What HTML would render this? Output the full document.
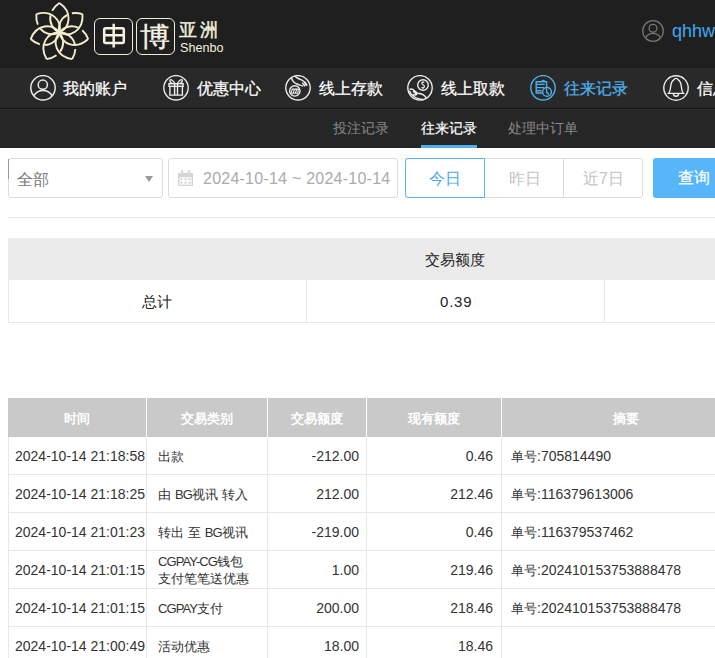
<!DOCTYPE html>
<html><head><meta charset="utf-8">
<style>
*{margin:0;padding:0;box-sizing:border-box}
html,body{width:715px;height:658px;overflow:hidden;background:#fff;font-family:"Liberation Sans",sans-serif}
.abs{position:absolute}
#hdr{position:absolute;left:0;top:0;width:715px;height:68px;background:#1f1f1f}
#nav{position:absolute;left:0;top:68px;width:715px;height:40px;background:#292929}
#navline{position:absolute;left:0;top:108px;width:715px;height:1px;background:#131313}
#navline2{position:absolute;left:0;top:109px;width:715px;height:1px;background:#303030}
#sub{position:absolute;left:0;top:110px;width:715px;height:38px;background:#262626}
.nv{position:absolute;top:81px;font-size:16px;line-height:16px;color:#fff;white-space:nowrap;-webkit-text-stroke:0.25px currentColor}
.nico{position:absolute;top:75px;width:26px;height:26px}
.sb{position:absolute;top:120px;font-size:14px;line-height:16px;color:#8a8a8a;white-space:nowrap}
.box{position:absolute;top:158px;height:40px;border:1px solid #dcdcdc;border-radius:3px;background:#fff}
.t{position:absolute;font-size:14px;line-height:16px;color:#333;white-space:nowrap}
.th{position:absolute;top:399px;height:38px;line-height:38px;text-align:center;color:#fff;font-weight:bold;font-size:14px;white-space:nowrap}
.td{position:absolute;height:38px;display:flex;align-items:center;font-size:14px;line-height:17px;color:#333;white-space:nowrap}
.td.r{justify-content:flex-end;text-align:right}
.c{font-size:13px}
.n{font-size:13px;letter-spacing:-0.9px}
.line{position:absolute;background:#e8e8e8}
</style></head><body>
<div id="hdr"></div>
<div id="nav"></div>
<div id="navline"></div>
<div id="navline2"></div>
<div id="sub"></div>

<!-- logo -->
<svg class="abs" style="left:26px;top:0" width="66" height="64" viewBox="-33.4 -32.5 66 64">
 <defs><path id="pt" d="M0.00 0.00 C11.00 -5.00 13.50 -20.35 0.00 -29.50 M0.00 0.00 C-6.82 -3.10 -10.37 -10.18 -8.87 -17.29 M-7.24 -21.74 C-5.75 -24.54 -3.38 -27.21 0.00 -29.50"/></defs>
 <g fill="none" stroke="#f2eecb" stroke-width="1.9" stroke-linecap="butt">
  <use href="#pt" transform="rotate(0.000)"/>
  <use href="#pt" transform="rotate(51.429)"/>
  <use href="#pt" transform="rotate(102.857)"/>
  <use href="#pt" transform="rotate(154.286)"/>
  <use href="#pt" transform="rotate(205.714)"/>
  <use href="#pt" transform="rotate(257.143)"/>
  <use href="#pt" transform="rotate(308.571)"/>
 </g>
 <circle cx="0" cy="0" r="1.9" fill="#eceae0"/>
</svg>
<div class="abs" style="left:94px;top:18px;width:39px;height:37px;border:1.8px solid #f0ecd8;border-radius:6px"></div>
<div class="abs" style="left:136px;top:18px;width:39px;height:37px;border:1.8px solid #f0ecd8;border-radius:6px"></div>
<svg class="abs" style="left:94px;top:18px" width="39" height="37" viewBox="0 0 39 37"><g fill="none" stroke="#f5f2e2" stroke-width="2.5"><rect x="10.2" y="10.2" width="19.6" height="14.8" rx="1.5"/><path d="M10.2 17.2 H29.8 M19.7 5.7 V29.4"/></g></svg>
<div class="abs" style="left:136px;top:18px;width:39px;height:37px;color:#f5f2e2;font-size:26px;line-height:37px;text-align:center;transform:translateY(1px) scale(1.16,1.04);-webkit-text-stroke:0.3px #f5f2e2">博</div>
<div class="abs" style="left:179px;top:20px;color:#f3f0de;font-size:18px;line-height:20px;letter-spacing:3px;-webkit-text-stroke:0.45px #f3f0de">亚洲</div>
<div class="abs" style="left:180px;top:41px;color:#f3f0de;font-size:12.6px;line-height:14px">Shenbo</div>

<!-- user -->
<svg class="abs" style="left:642px;top:20px" width="22" height="22" viewBox="0 0 22 22">
 <g fill="none" stroke="#777" stroke-width="1.25"><circle cx="11" cy="11" r="10.3"/><circle cx="11" cy="8.3" r="3.9"/><path d="M3.6 17.6 A8.6 8.6 0 0 1 18.4 17.6"/></g>
</svg>
<div class="abs" style="left:672px;top:21px;color:#40a8f6;font-size:18px;line-height:20px">qhhw</div>

<!-- nav -->
<svg class="nico" style="left:30px" viewBox="0 0 26 26"><g fill="none" stroke="#ececec" stroke-width="1.5"><circle cx="13" cy="12.8" r="12.2"/><circle cx="12.8" cy="9.7" r="4.6"/><path d="M3.8 20.8 A10.6 10.6 0 0 1 22.2 20.8"/></g></svg>
<div class="nv" style="left:63px">我的账户</div>
<svg class="nico" style="left:163px" viewBox="0 0 26 26"><g fill="none" stroke="#ececec" stroke-width="1.4"><circle cx="13" cy="12.8" r="12.2"/><rect x="6" y="8.7" width="14.1" height="2.6"/><path d="M6.9 11.3 V20.1 H19.4 V11.3 M11.6 8.7 V20.1 M14.5 8.7 V20.1 M12 8.7 C10.5 6.5 8.5 4.2 7.3 4.8 C6.2 5.5 7.3 7.8 9.3 8.7 M14.2 8.7 C15.7 6.5 17.7 4.2 18.9 4.8 C20 5.5 18.9 7.8 16.9 8.7"/></g></svg>
<div class="nv" style="left:197px">优惠中心</div>
<svg class="nico" style="left:285px" viewBox="0 0 26 26"><g fill="none" stroke="#ececec" stroke-width="1.4"><circle cx="13" cy="12.8" r="12.2"/><circle cx="9.8" cy="15.9" r="5.2"/><path d="M7.3 14.1 H13.3 L12.8 18.2 H6 Z M9.4 14.3 L8.3 18 M11.6 14.3 L10.5 18" stroke-width="1.15"/><path d="M6.3 1.8 C7 5.5 9 8 12 9 C14 9.8 16 10.3 18.3 11.2 M9.3 0.8 C11 2.6 13 3.8 16.5 4.9 C19.5 6.2 21.2 8.5 22.2 10.6 M17.2 7.6 L20.2 11.2 M19.2 7.2 L21.8 10.6"/></g></svg>
<div class="nv" style="left:319px">线上存款</div>
<svg class="nico" style="left:407px" viewBox="0 0 26 26"><g fill="none" stroke="#ececec" stroke-width="1.4"><circle cx="13" cy="12.8" r="12.2"/><circle cx="16" cy="10" r="5.3"/><path d="M17.3 7.6 C16.5 6.8 14.8 7 14.8 8.3 C14.8 10 17.4 9.6 17.4 11.6 C17.4 13 15.5 13.1 14.6 12.3 M16 6.2 V7.2 M16 12.9 V13.9" stroke-width="1.2"/><path d="M2.6 14.6 C3.6 13.6 5.2 13.9 6.6 15 L10.6 18.2 C14 18.4 17.6 19.6 19.4 23.2 M2.4 15.6 C3.6 19.2 7.2 22.6 12.5 24 L16.6 24.7 M6 16 L9.6 19.4 C8.8 20.4 7.4 20.2 6.2 19.2"/></g></svg>
<div class="nv" style="left:441px">线上取款</div>
<svg class="nico" style="left:530px" viewBox="0 0 26 26"><g fill="none" stroke="#4fb0ee" stroke-width="1.4"><circle cx="13" cy="12.8" r="12.2"/><path d="M12.3 18 H6.2 V6.7 H16.6 V12.2"/><path d="M11.7 6.7 A1.6 1.6 0 0 1 14.8 6.7"/><path d="M6.8 9.4 H14.7 M6.8 12.6 H14 M6.8 15.8 H11.5"/><circle cx="17" cy="16.9" r="4.4"/><path d="M16.6 13.6 V17.4 L19 19.4"/></g></svg>
<div class="nv" style="left:564px;color:#4fb0ee">往来记录</div>
<svg class="nico" style="left:663px" viewBox="0 0 26 26"><g fill="none" stroke="#ececec" stroke-width="1.4"><circle cx="13" cy="13" r="12.2"/><path d="M5.5 18.4 H20.5 C19.2 17 18.6 15 18.4 12 C18.1 8 17 5.8 15 4.6 C14.5 3 11.5 3 11 4.6 C9 5.8 7.9 8 7.6 12 C7.4 15 6.8 17 5.5 18.4 Z M10.4 18.4 C10.4 22.2 15.6 22.2 15.6 18.4"/></g></svg>
<div class="nv" style="left:697px">信息</div>

<!-- subnav -->
<div class="sb" style="left:333px">投注记录</div>
<div class="sb" style="left:421px;color:#fff;-webkit-text-stroke:0.2px #fff">往来记录</div>
<div class="abs" style="left:421px;top:145px;width:56px;height:3px;background:#4fb0f2"></div>
<div class="sb" style="left:508px">处理中订单</div>

<!-- filters -->
<div class="box" style="left:8px;width:155px"></div>
<div class="abs" style="left:8px;top:159px;width:1px;height:20px;background:#999"></div>
<div class="abs" style="left:17px;top:171px;font-size:16px;line-height:18px;color:#777">全部</div>
<div class="abs" style="left:145px;top:176px;width:0;height:0;border-left:4px solid transparent;border-right:4px solid transparent;border-top:6px solid #999"></div>
<div class="box" style="left:168px;width:230px"></div>
<svg class="abs" style="left:177px;top:170px" width="17" height="17" viewBox="0 0 17 17"><path fill="#d4d4d4" d="M1 3 H4 V4.5 H6 V3 H11 V4.5 H13 V3 H16 V16 H1 Z"/><rect x="2.5" y="7.2" width="12" height="7.5" fill="#fff"/><g fill="#d4d4d4"><rect x="3.5" y="8.2" width="2" height="2"/><rect x="7.5" y="8.2" width="2" height="2"/><rect x="11.5" y="8.2" width="2" height="2"/><rect x="3.5" y="11.7" width="2" height="2"/><rect x="7.5" y="11.7" width="2" height="2"/><rect x="11.5" y="11.7" width="2" height="2"/></g><g fill="none" stroke="#d4d4d4" stroke-width="1.1"><rect x="4.2" y="0.8" width="1.6" height="3.6" rx="0.8"/><rect x="11.2" y="0.8" width="1.6" height="3.6" rx="0.8"/></g></svg>
<div class="abs" style="left:203px;top:170px;font-size:16px;line-height:18px;color:#ababab;letter-spacing:0.24px">2024-10-14 ~ 2024-10-14</div>

<div class="abs" style="left:405px;top:158px;width:238px;height:40px;border:1px solid #dcdcdc;border-radius:3px"></div>
<div class="abs" style="left:484px;top:158px;width:1px;height:40px;background:#dcdcdc"></div>
<div class="abs" style="left:563px;top:158px;width:1px;height:40px;background:#dcdcdc"></div>
<div class="abs" style="left:405px;top:158px;width:80px;height:40px;border:1px solid #5ab4f4;border-radius:3px 0 0 3px"></div>
<div class="abs" style="left:429px;top:170px;font-size:16px;line-height:18px;color:#4aa8ef">今日</div>
<div class="abs" style="left:509px;top:170px;font-size:16px;line-height:18px;color:#c4c4c4">昨日</div>
<div class="abs" style="left:583px;top:170px;font-size:16px;line-height:18px;color:#c4c4c4">近7日</div>
<div class="abs" style="left:653px;top:158px;width:100px;height:40px;background:#56b6f9;border-radius:3px"></div>
<div class="abs" style="left:678px;top:169px;font-size:16px;line-height:18px;color:#fff;-webkit-text-stroke:0.2px #fff">查询</div>

<div class="line" style="left:8px;top:217px;width:707px;height:1px"></div>

<!-- summary -->
<div class="abs" style="left:8px;top:238px;width:707px;height:42px;background:#ebebeb"></div>
<div class="line" style="left:8px;top:280px;width:1px;height:43px"></div>
<div class="line" style="left:306px;top:280px;width:1px;height:43px"></div>
<div class="line" style="left:604px;top:280px;width:1px;height:43px"></div>
<div class="line" style="left:8px;top:322px;width:707px;height:1px"></div>
<div class="t" style="left:142px;top:252px;width:0"></div>
<div class="t" style="left:425px;top:252px;font-size:15px;color:#222">交易额度</div>
<div class="t" style="left:142px;top:294px;font-size:15px;color:#222">总计</div>
<div class="t" style="left:440px;top:294px;font-size:15px;color:#222;letter-spacing:0.8px">0.39</div>

<!-- table -->
<div class="abs" style="left:8px;top:398px;width:707px;height:39px;background:#c9c9c9"></div>
<div class="abs" style="left:146px;top:398px;width:1px;height:39px;background:#fff"></div>
<div class="abs" style="left:267px;top:398px;width:1px;height:39px;background:#fff"></div>
<div class="abs" style="left:366px;top:398px;width:1px;height:39px;background:#fff"></div>
<div class="abs" style="left:501px;top:398px;width:1px;height:39px;background:#fff"></div>
<div class="line" style="left:8px;top:437px;width:1px;height:221px"></div>
<div class="line" style="left:146px;top:437px;width:1px;height:221px"></div>
<div class="line" style="left:267px;top:437px;width:1px;height:221px"></div>
<div class="line" style="left:366px;top:437px;width:1px;height:221px"></div>
<div class="line" style="left:501px;top:437px;width:1px;height:221px"></div>
<div class="line" style="left:8px;top:474px;width:707px;height:1px"></div>
<div class="line" style="left:8px;top:512px;width:707px;height:1px"></div>
<div class="line" style="left:8px;top:550px;width:707px;height:1px"></div>
<div class="line" style="left:8px;top:588px;width:707px;height:1px"></div>
<div class="line" style="left:8px;top:626px;width:707px;height:1px"></div>
<div class="th" style="left:8px;width:138px"><span class="c">时间</span></div>
<div class="th" style="left:146px;width:121px"><span class="c">交易类别</span></div>
<div class="th" style="left:267px;width:99px"><span class="c">交易额度</span></div>
<div class="th" style="left:366px;width:135px"><span class="c">现有额度</span></div>
<div class="th" style="left:501px;width:250px"><span class="c">摘要</span></div>
<div class="td" style="left:15px;top:437px"><span>2024-10-14 21:18:58</span></div>
<div class="td" style="left:158px;top:437px"><span><span class="c">出款</span></span></div>
<div class="td r" style="left:267px;width:92px;top:437px"><span>-212.00</span></div>
<div class="td r" style="left:366px;width:127px;top:437px"><span>0.46</span></div>
<div class="td" style="left:511px;top:437px"><span><span class="c">单号</span>:705814490</span></div>
<div class="td" style="left:15px;top:475px"><span>2024-10-14 21:18:25</span></div>
<div class="td" style="left:158px;top:475px"><span><span class="c">由</span> <span class="n">BG</span><span class="c">视讯</span> <span class="c">转入</span></span></div>
<div class="td r" style="left:267px;width:92px;top:475px"><span>212.00</span></div>
<div class="td r" style="left:366px;width:127px;top:475px"><span>212.46</span></div>
<div class="td" style="left:511px;top:475px"><span><span class="c">单号</span>:116379613006</span></div>
<div class="td" style="left:15px;top:513px"><span>2024-10-14 21:01:23</span></div>
<div class="td" style="left:158px;top:513px"><span><span class="c">转出</span> <span class="c">至</span> <span class="n">BG</span><span class="c">视讯</span></span></div>
<div class="td r" style="left:267px;width:92px;top:513px"><span>-219.00</span></div>
<div class="td r" style="left:366px;width:127px;top:513px"><span>0.46</span></div>
<div class="td" style="left:511px;top:513px"><span><span class="c">单号</span>:116379537462</span></div>
<div class="td" style="left:15px;top:551px"><span>2024-10-14 21:01:15</span></div>
<div class="td" style="left:158px;top:551px"><span><span class="n">CGPAY-CG</span><span class="c">钱包</span><br><span class="c">支付笔笔送优惠</span></span></div>
<div class="td r" style="left:267px;width:92px;top:551px"><span>1.00</span></div>
<div class="td r" style="left:366px;width:127px;top:551px"><span>219.46</span></div>
<div class="td" style="left:511px;top:551px"><span><span class="c">单号</span>:202410153753888478</span></div>
<div class="td" style="left:15px;top:589px"><span>2024-10-14 21:01:15</span></div>
<div class="td" style="left:158px;top:589px"><span><span class="n">CGPAY</span><span class="c">支付</span></span></div>
<div class="td r" style="left:267px;width:92px;top:589px"><span>200.00</span></div>
<div class="td r" style="left:366px;width:127px;top:589px"><span>218.46</span></div>
<div class="td" style="left:511px;top:589px"><span><span class="c">单号</span>:202410153753888478</span></div>
<div class="td" style="left:15px;top:627px"><span>2024-10-14 21:00:49</span></div>
<div class="td" style="left:158px;top:627px"><span><span class="c">活动优惠</span></span></div>
<div class="td r" style="left:267px;width:92px;top:627px"><span>18.00</span></div>
<div class="td r" style="left:366px;width:127px;top:627px"><span>18.46</span></div>
<div class="td" style="left:511px;top:627px"><span></span></div>
</body></html>
